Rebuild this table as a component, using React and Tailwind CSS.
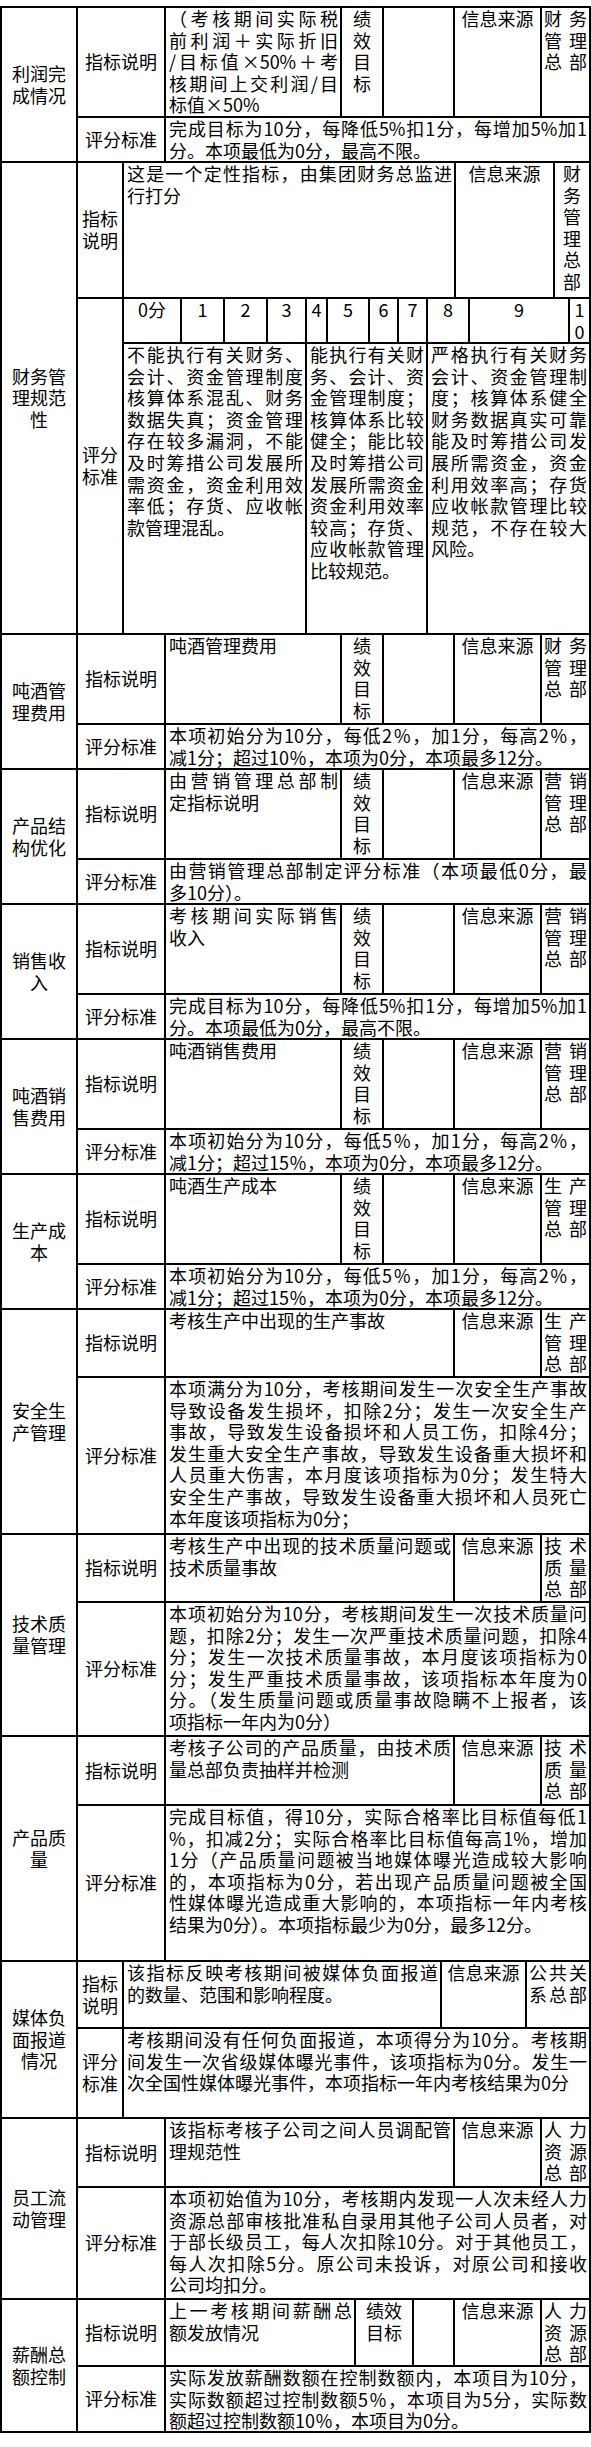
import React from "react";

// one bordered cell; the wrapper draws the top/left edge, each cell its right/bottom edge
const Cell = ({ className = "", children }) => (
  <div className={`border-r-2 border-b-2 border-black ${className}`}>{children}</div>
);

// forced lines: every full line is spread edge to edge, the last one stays left
const Lines = ({ lines, className = "" }) => (
  <div className={className}>
    {lines.map((t, i) => (
      <div
        key={i}
        className={
          i < lines.length - 1
            ? "whitespace-nowrap text-justify [text-align-last:justify]"
            : "whitespace-nowrap"
        }
      >
        {t}
      </div>
    ))}
  </div>
);

const Stack = ({ lines, spread = false, className = "" }) => (
  <div className={className}>
    {lines.map((t, i) => (
      <div
        key={i}
        className={spread ? "whitespace-nowrap text-justify [text-align-last:justify]" : "whitespace-nowrap text-center"}
      >
        {t}
      </div>
    ))}
  </div>
);

const Section = ({ name, children }) => (
  <div className="flex">
    <Cell className="w-[76px] shrink-0 flex items-center justify-center">
      <Stack lines={name} />
    </Cell>
    <div className="flex-1 flex flex-col">{children}</div>
  </div>
);

const Label = ({ lines, className = "w-[88px]" }) => (
  <Cell className={`${className} shrink-0 flex items-center justify-center`}>
    <Stack lines={lines} />
  </Cell>
);

const Source = ({ className = "w-[87px]" }) => (
  <Cell className={`${className} shrink-0 text-center`}>信息来源</Cell>
);

const Dept = ({ lines, spread = true }) => (
  <Cell className="flex-1 min-w-0 px-[2px]">
    <Stack lines={lines} spread={spread} />
  </Cell>
);

const Perf = ({ lines = ["绩", "效", "目", "标"], className = "w-[42px]" }) => (
  <Cell className={`${className} shrink-0`}>
    <Stack lines={lines} />
  </Cell>
);

// sections with the 绩效目标 column
const TargetSection = ({ name, desc, dept, score, top = "h-[90px]" }) => (
  <Section name={name}>
    <div className={`flex ${top}`}>
      <Label lines={["指标说明"]} />
      <Cell className="w-[176px] shrink-0 pl-[3px] pr-[2px]">
        <Lines lines={desc} />
      </Cell>
      <Perf />
      <Cell className="w-[71px] shrink-0" />
      <Source />
      <Dept lines={dept} />
    </div>
    <div className="flex h-[45px]">
      <Label lines={["评分标准"]} />
      <Cell className="flex-1 min-w-0 pl-[3px] pr-[2px]">
        <Lines lines={score} />
      </Cell>
    </div>
  </Section>
);

// sections without it
const PlainSection = ({ name, desc, dept, score, top, bottom }) => (
  <Section name={name}>
    <div className={`flex ${top}`}>
      <Label lines={["指标说明"]} />
      <Cell className="w-[289px] shrink-0 pl-[3px] pr-[2px]">
        <Lines lines={desc} />
      </Cell>
      <Source />
      <Dept lines={dept} />
    </div>
    <div className={`flex ${bottom}`}>
      <Label lines={["评分标准"]} />
      <Cell className="flex-1 min-w-0 pl-[3px] pr-[2px]">
        <Lines lines={score} />
      </Cell>
    </div>
  </Section>
);

const scoreCells = [
  ["0分", "w-[58px]"],
  ["1", "w-[43px]"],
  ["2", "w-[43px]"],
  ["3", "w-[39px]"],
  ["4", "w-[21px]"],
  ["5", "w-[42px]"],
  ["6", "w-[29px]"],
  ["7", "w-[29px]"],
  ["8", "w-[42px]"],
  ["9", "w-[100px]"],
];

const FinanceSection = () => (
  <Section name={["财务管", "理规范", "性"]}>
    <div className="flex h-[136px]">
      <Label lines={["指标", "说明"]} className="w-[46px]" />
      <Cell className="w-[332px] shrink-0 pl-[3px] pr-[2px]">
        <Lines lines={["这是一个定性指标，由集团财务总监进", "行打分"]} />
      </Cell>
      <Source className="w-[99px]" />
      <Dept lines={["财", "务", "管", "理", "总", "部"]} spread={false} />
    </div>
    <div className="flex">
      <Label lines={["评分", "标准"]} className="w-[46px]" />
      <div className="flex-1 flex flex-col">
        <div className="flex h-[45px]">
          {scoreCells.map(([t, w]) => (
            <Cell key={t} className={`${w} shrink-0 text-center`}>
              {t}
            </Cell>
          ))}
          <Cell className="flex-1 min-w-0">
            <Stack lines={["1", "0"]} />
          </Cell>
        </div>
        <div className="flex h-[291px]">
          <Cell className="w-[183px] shrink-0 pl-[3px] pr-[2px]">
            <Lines
              lines={[
                "不能执行有关财务、",
                "会计、资金管理制度",
                "核算体系混乱、财务",
                "数据失真；资金管理",
                "存在较多漏洞，不能",
                "及时筹措公司发展所",
                "需资金，资金利用效",
                "率低；存货、应收帐",
                "款管理混乱。",
              ]}
            />
          </Cell>
          <Cell className="w-[121px] shrink-0 pl-[3px] pr-[2px]">
            <Lines
              lines={[
                "能执行有关财",
                "务、会计、资",
                "金管理制度；",
                "核算体系比较",
                "健全；能比较",
                "及时筹措公司",
                "发展所需资金",
                "资金利用效率",
                "较高；存货、",
                "应收帐款管理",
                "比较规范。",
              ]}
            />
          </Cell>
          <Cell className="flex-1 min-w-0 pl-[3px] pr-[2px]">
            <Lines
              lines={[
                "严格执行有关财务",
                "会计、资金管理制",
                "度；核算体系健全",
                "财务数据真实可靠",
                "能及时筹措公司发",
                "展所需资金，资金",
                "利用效率高；存货",
                "应收帐款管理比较",
                "规范，不存在较大",
                "风险。",
              ]}
            />
          </Cell>
        </div>
      </div>
    </div>
  </Section>
);

const MediaSection = () => (
  <Section name={["媒体负", "面报道", "情况"]}>
    <div className="flex h-[67px]">
      <Label lines={["指标", "说明"]} className="w-[46px]" />
      <Cell className="w-[318px] shrink-0 pl-[3px] pr-[2px]">
        <Lines lines={["该指标反映考核期间被媒体负面报道", "的数量、范围和影响程度。"]} />
      </Cell>
      <Source className="w-[85px]" />
      <Dept lines={["公共关", "系总部"]} />
    </div>
    <div className="flex h-[90px]">
      <Label lines={["评分", "标准"]} className="w-[46px]" />
      <Cell className="flex-1 min-w-0 pl-[3px] pr-[2px]">
        <Lines
          lines={[
            "考核期间没有任何负面报道，本项得分为10分。考核期",
            "间发生一次省级媒体曝光事件，该项指标为0分。发生一",
            "次全国性媒体曝光事件，本项指标一年内考核结果为0分",
          ]}
        />
      </Cell>
    </div>
  </Section>
);

const PaySection = () => (
  <Section name={["薪酬总", "额控制"]}>
    <div className="flex h-[67px]">
      <Label lines={["指标说明"]} />
      <Cell className="w-[190px] shrink-0 pl-[3px] pr-[2px]">
        <Lines lines={["上一考核期间薪酬总", "额发放情况"]} />
      </Cell>
      <Perf lines={["绩效", "目标"]} className="w-[58px]" />
      <Cell className="w-[41px] shrink-0" />
      <Source />
      <Dept lines={["人力", "资源", "总部"]} />
    </div>
    <div className="flex h-[66px]">
      <Label lines={["评分标准"]} />
      <Cell className="flex-1 min-w-0 pl-[3px] pr-[2px]">
        <Lines
          lines={[
            "实际发放薪酬数额在控制数额内，本项目为10分，",
            "实际数额超过控制数额5％，本项目为5分，实际数",
            "额超过控制数额10％，本项目为0分。",
          ]}
        />
      </Cell>
    </div>
  </Section>
);

const finance = ["财务", "管理", "总部"];
const sales = ["营销", "管理", "总部"];
const prod = ["生产", "管理", "总部"];
const tech = ["技术", "质量", "总部"];

const profitScore = ["完成目标为10分，每降低5%扣1分，每增加5%加1", "分。本项最低为0分，最高不限。"];
const costScore = ["本项初始分为10分，每低5％，加1分，每高2％，", "减1分；超过15％，本项为0分，本项最多12分。"];

export default function App() {
  return (
    <div className="w-[591px] bg-white pt-[6px] pb-[14px] text-[18px] leading-[21.6px] text-black font-['Noto_Sans_CJK_SC','Noto_Sans',sans-serif]">
      <div className="border-l-2 border-t-2 border-black">
        <TargetSection
          name={["利润完", "成情况"]}
          top="h-[110px]"
          desc={["（考核期间实际税", "前利润＋实际折旧", "/目标值×50%＋考", "核期间上交利润/目", "标值×50%"]}
          dept={finance}
          score={profitScore}
        />
        <FinanceSection />
        <TargetSection
          name={["吨酒管", "理费用"]}
          desc={["吨酒管理费用"]}
          dept={finance}
          score={["本项初始分为10分，每低2％，加1分，每高2％，", "减1分；超过10％，本项为0分，本项最多12分。"]}
        />
        <TargetSection
          name={["产品结", "构优化"]}
          desc={["由营销管理总部制", "定指标说明"]}
          dept={sales}
          score={["由营销管理总部制定评分标准（本项最低0分，最", "多10分）。"]}
        />
        <TargetSection
          name={["销售收", "入"]}
          desc={["考核期间实际销售", "收入"]}
          dept={sales}
          score={profitScore}
        />
        <TargetSection name={["吨酒销", "售费用"]} desc={["吨酒销售费用"]} dept={sales} score={costScore} />
        <TargetSection name={["生产成", "本"]} desc={["吨酒生产成本"]} dept={prod} score={costScore} />
        <PlainSection
          name={["安全生", "产管理"]}
          top="h-[68px]"
          bottom="h-[157px]"
          desc={["考核生产中出现的生产事故"]}
          dept={prod}
          score={[
            "本项满分为10分，考核期间发生一次安全生产事故",
            "导致设备发生损坏，扣除2分；发生一次安全生产",
            "事故，导致发生设备损坏和人员工伤，扣除4分；",
            "发生重大安全生产事故，导致发生设备重大损坏和",
            "人员重大伤害，本月度该项指标为0分；发生特大",
            "安全生产事故，导致发生设备重大损坏和人员死亡",
            "本年度该项指标为0分；",
          ]}
        />
        <PlainSection
          name={["技术质", "量管理"]}
          top="h-[68px]"
          bottom="h-[134px]"
          desc={["考核生产中出现的技术质量问题或", "技术质量事故"]}
          dept={tech}
          score={[
            "本项初始分为10分，考核期间发生一次技术质量问",
            "题，扣除2分；发生一次严重技术质量问题，扣除4",
            "分；发生一次技术质量事故，本月度该项指标为0",
            "分；发生严重技术质量事故，该项指标本年度为0",
            "分。（发生质量问题或质量事故隐瞒不上报者，该",
            "项指标一年内为0分）",
          ]}
        />
        <PlainSection
          name={["产品质", "量"]}
          top="h-[69px]"
          bottom="h-[156px]"
          desc={["考核子公司的产品质量，由技术质", "量总部负责抽样并检测"]}
          dept={tech}
          score={[
            "完成目标值，得10分，实际合格率比目标值每低1",
            "%，扣减2分；实际合格率比目标值每高1%，增加",
            "1分（产品质量问题被当地媒体曝光造成较大影响",
            "的，本项指标为0分，若出现产品质量问题被全国",
            "性媒体曝光造成重大影响的，本项指标一年内考核",
            "结果为0分）。本项指标最少为0分，最多12分。",
          ]}
        />
        <MediaSection />
        <PlainSection
          name={["员工流", "动管理"]}
          top="h-[69px]"
          bottom="h-[112px]"
          desc={["该指标考核子公司之间人员调配管", "理规范性"]}
          dept={["人力", "资源", "总部"]}
          score={[
            "本项初始值为10分，考核期内发现一人次未经人力",
            "资源总部审核批准私自录用其他子公司人员者，对",
            "于部长级员工，每人次扣除10分。对于其他员工，",
            "每人次扣除5分。原公司未投诉，对原公司和接收",
            "公司均扣分。",
          ]}
        />
        <PaySection />
      </div>
    </div>
  );
}
